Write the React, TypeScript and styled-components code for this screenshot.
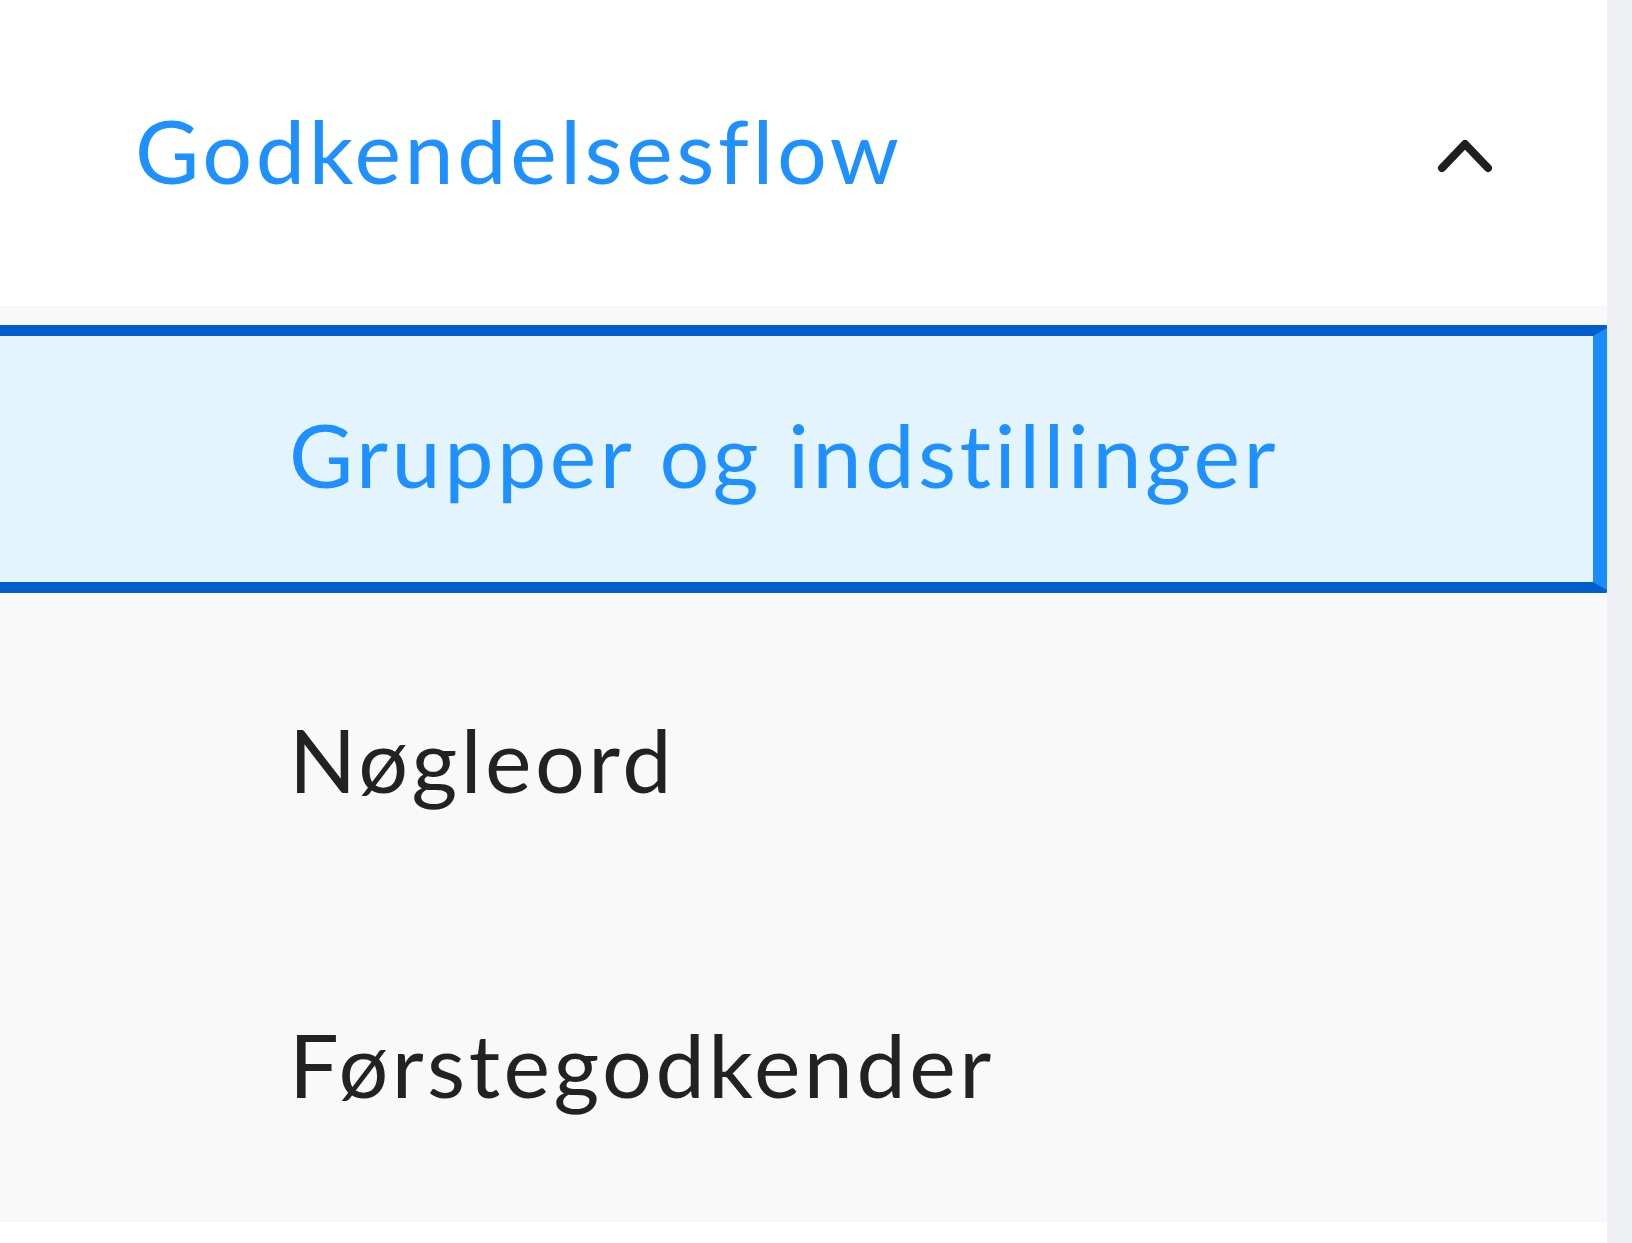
import styled, { createGlobalStyle } from "styled-components";

const GlobalStyle = createGlobalStyle`
  html, body {
    margin: 0;
    padding: 0;
    background: #ffffff;
  }
  * {
    box-sizing: border-box;
  }
`;

const Page = styled.div`
  display: flex;
  width: 1632px;
  height: 1243px;
  font-family: Lato, "Noto Sans", sans-serif;
  font-variant-ligatures: none;
  overflow: hidden;
`;

const Sidebar = styled.nav`
  width: 1607px;
  flex-shrink: 0;
  background: #ffffff;
  display: flex;
  flex-direction: column;
`;

const ScrollTrack = styled.div`
  flex: 1;
  background: #eff0f3;
`;

const SectionHeader = styled.button`
  height: 305px;
  width: 100%;
  display: flex;
  align-items: center;
  justify-content: space-between;
  padding: 0 112px 6px 135px;
  border: none;
  background: #ffffff;
  cursor: pointer;
  font-family: inherit;
`;

const SectionTitle = styled.span`
  font-size: 88px;
  font-weight: 400;
  letter-spacing: 3.6px;
  color: #1e90ff;
  line-height: 1;
  font-variant-ligatures: none;
`;

const Chevron = styled.svg`
  width: 60px;
  height: 40px;
  margin-top: 12px;
`;

const SubList = styled.ul`
  list-style: none;
  margin: 0;
  padding: 20px 0;
  background: #f9f9f9;
  display: flex;
  flex-direction: column;
  gap: 37px;
`;

const SubItem = styled.li<{ $active?: boolean }>`
  height: 268px;
  display: flex;
  align-items: center;
  padding: 0 0 10px 289px;
  font-size: 88px;
  letter-spacing: 3.5px;
  line-height: 1;
  color: ${(p) => (p.$active ? "#1e90ff" : "#222222")};
  background: ${(p) => (p.$active ? "#e4f4fd" : "transparent")};
  border-top: 11px solid ${(p) => (p.$active ? "#005fcc" : "transparent")};
  border-bottom: 11px solid ${(p) => (p.$active ? "#005fcc" : "transparent")};
  border-right: 19px solid ${(p) => (p.$active ? "#1a8cff" : "transparent")};
  border-radius: 0 7px 7px 0;
  margin-right: ${(p) => (p.$active ? "-5px" : "0")};
  cursor: pointer;
`;

const items = ["Grupper og indstillinger", "Nøgleord", "Førstegodkender"];

export default function App() {
  return (
    <>
      <GlobalStyle />
      <Page>
        <Sidebar>
          <SectionHeader>
            <SectionTitle>Godkendelsesflow</SectionTitle>
            <Chevron viewBox="0 0 60 40" fill="none">
              <path
                d="M7 32 L30 8 L53 32"
                stroke="#1f1f1f"
                strokeWidth="8"
                strokeLinecap="round"
                strokeLinejoin="round"
              />
            </Chevron>
          </SectionHeader>
          <SubList>
            {items.map((label, i) => (
              <SubItem key={label} $active={i === 0}>
                {label}
              </SubItem>
            ))}
          </SubList>
        </Sidebar>
        <ScrollTrack />
      </Page>
    </>
  );
}
